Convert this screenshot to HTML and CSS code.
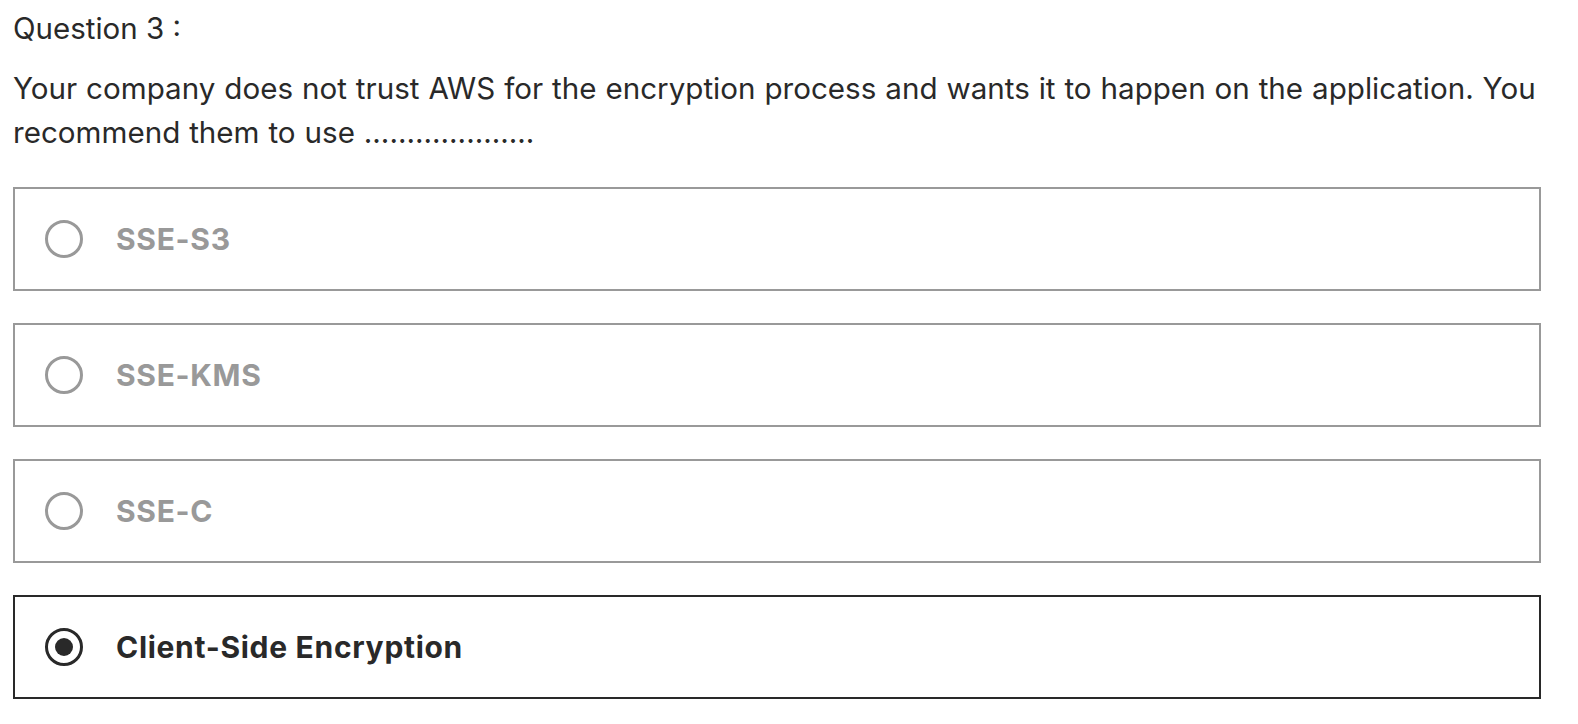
FILE: index.html
```html
<!DOCTYPE html>
<html>
<head>
<meta charset="utf-8">
<link rel="stylesheet" href="styles.css">
</head>
<body>
<div class="quiz">
  <div class="q-title">Question 3 :</div>
  <p class="q-text">Your company does not trust AWS for the encryption process and wants it to happen on the application. You recommend them to use ....................</p>
  <div class="options">
    <div class="option"><span class="radio"></span><span class="label">SSE-S3</span></div>
    <div class="option"><span class="radio"></span><span class="label">SSE-KMS</span></div>
    <div class="option"><span class="radio"></span><span class="label">SSE-C</span></div>
    <div class="option selected"><span class="radio"></span><span class="label">Client-Side Encryption</span></div>
  </div>
</div>
</body>
</html>
```

FILE: styles.css
```css
html, body {
  margin: 0;
  padding: 0;
  background: #ffffff;
}
body {
  font-family: Inter, "Liberation Sans", Arial, sans-serif;
  color: #292929;
}
.quiz {
  padding: 8px 37px 0 13px;
}
.q-title {
  font-size: 29.5px;
  line-height: 40px;
}
.q-text {
  margin: 18px 0 0 0;
  font-size: 29.6px;
  line-height: 44px;
  word-spacing: 0.6px;
}
.options {
  margin-top: 33px;
  display: flex;
  flex-direction: column;
  gap: 32px;
}
.option {
  height: 100px;
  border: 2px solid #999999;
  display: flex;
  align-items: center;
  padding-left: 30px;
}
.radio {
  width: 32px;
  height: 32px;
  border: 3.5px solid #999999;
  border-radius: 50%;
  box-sizing: content-box;
  flex: none;
  position: relative;
}
.label {
  margin-left: 33px;
  font-size: 30px;
  letter-spacing: 0.7px;
  font-weight: bold;
  color: #999999;
}
.option.selected {
  border-color: #292929;
}
.option.selected .radio {
  border-color: #292929;
}
.option.selected .radio::after {
  content: "";
  position: absolute;
  left: 7px;
  top: 7px;
  width: 18px;
  height: 18px;
  border-radius: 50%;
  background: #292929;
}
.option.selected .label {
  color: #292929;
}
```
